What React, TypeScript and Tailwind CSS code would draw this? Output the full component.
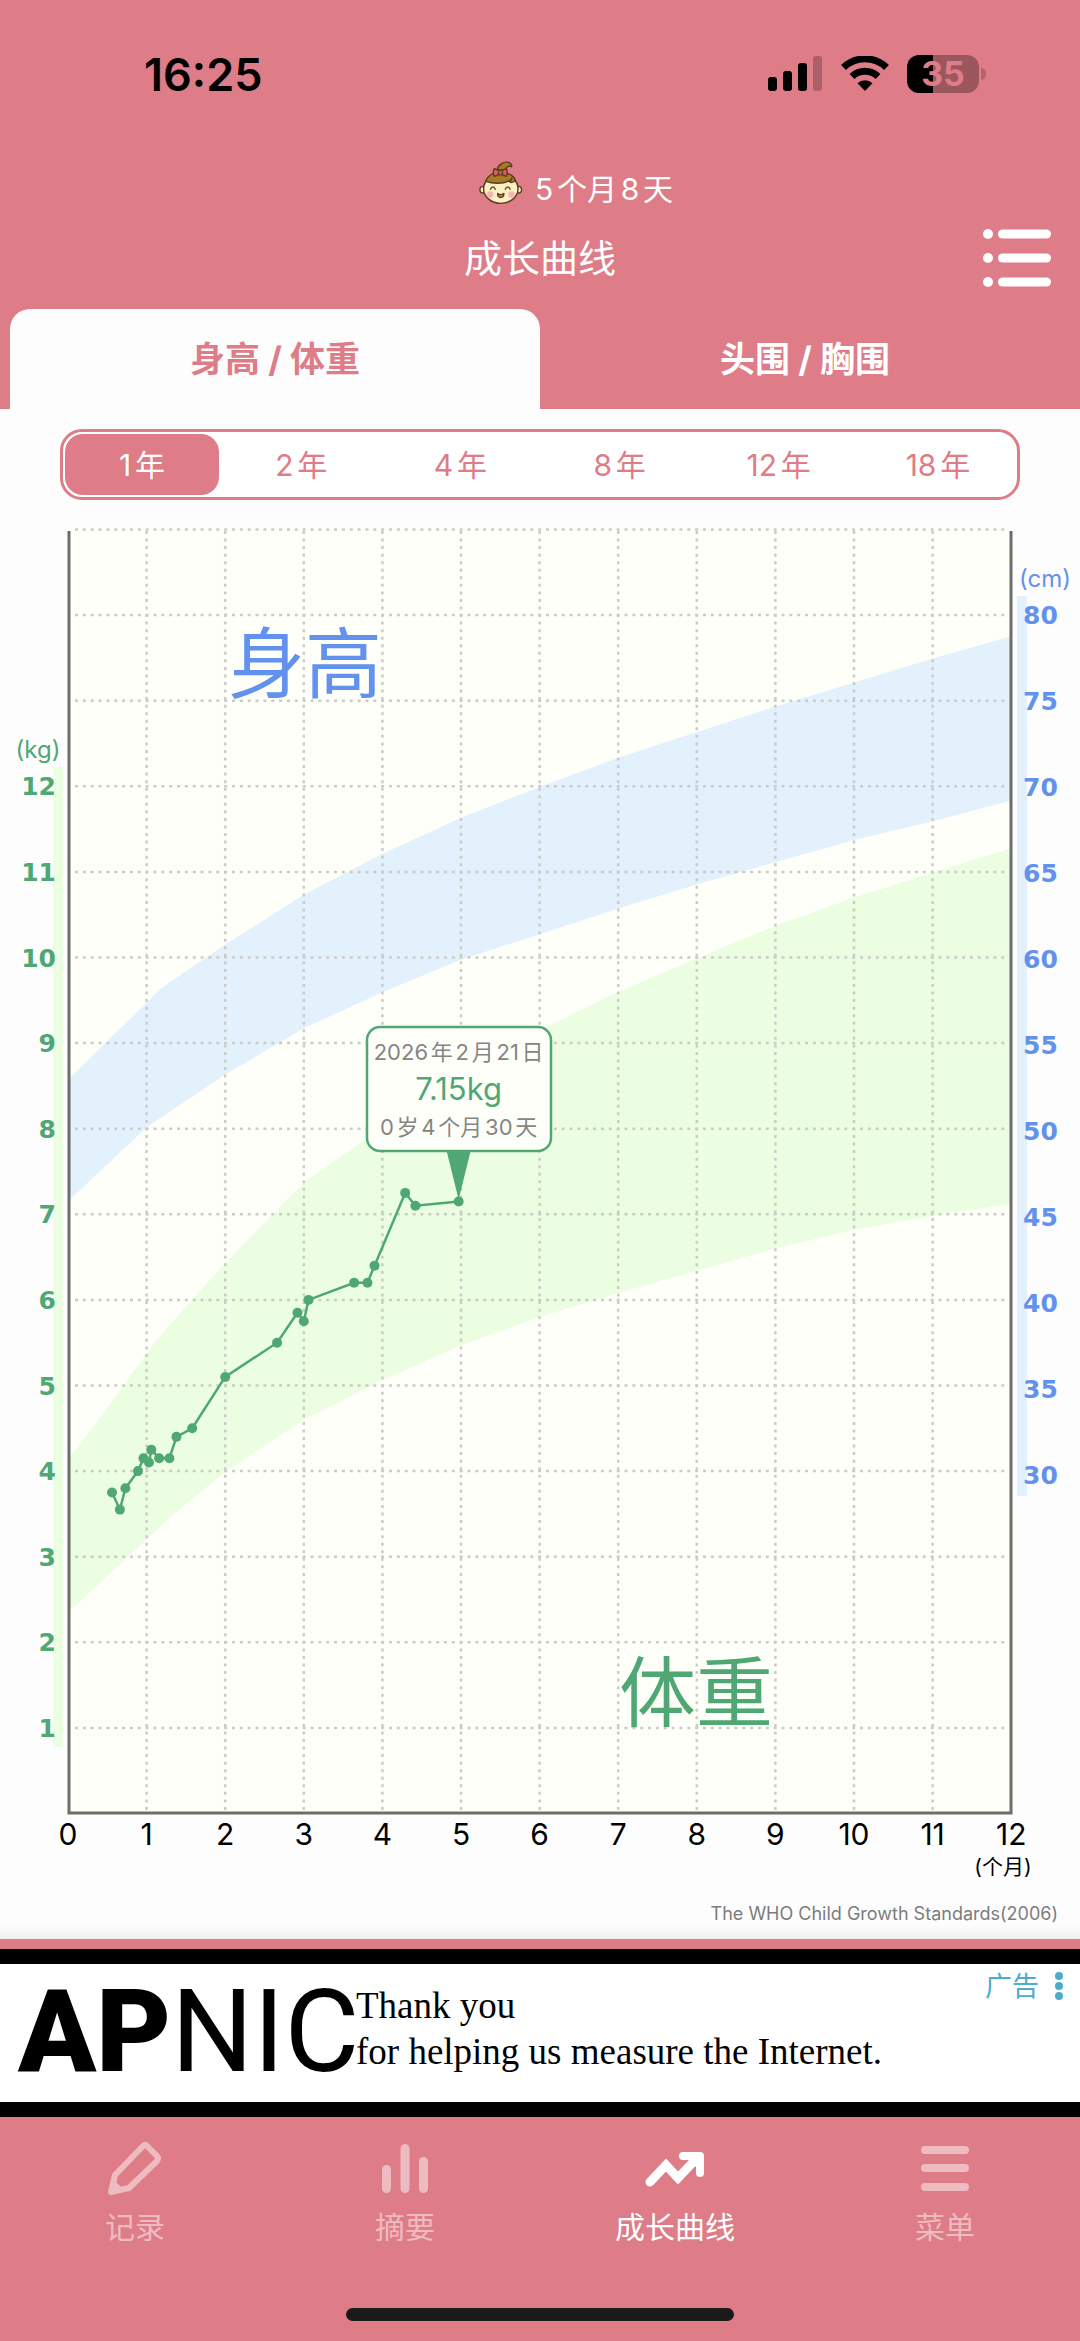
import { useState } from 'react';
import clsx from 'clsx';

type Point = [number, number];

// ---------------------------------------------------------------------------
// Data: WHO bands (month, value) and the recorded weights
// ---------------------------------------------------------------------------

const HEIGHT_UPPER: Point[] = [
  [0, 52.9], [1, 57.4], [1.17, 58.2], [2, 60.8], [3, 63.7], [4, 66.1], [5, 68.2],
  [6, 70], [7, 71.7], [8, 73.2], [9, 74.7], [10, 76.1], [11, 77.5], [12, 78.8],
];
const HEIGHT_LOWER: Point[] = [
  [0, 45.8], [1, 50.1], [1.25, 50.9], [2, 53.2], [3, 55.9], [4, 58], [5, 59.9],
  [6, 61.4], [7, 62.9], [8, 64.3], [9, 65.6], [10, 66.9], [11, 68], [12, 69.2],
];
const WEIGHT_UPPER: Point[] = [
  [0, 4.16], [0.1, 4.24], [1, 5.37], [1.17, 5.58], [2, 6.43], [3, 7.37], [4, 8.02], [5, 8.66],
  [6, 9.15], [7, 9.6], [8, 9.99], [9, 10.37], [10, 10.7], [11, 10.99], [12, 11.28],
];
const WEIGHT_LOWER: Point[] = [
  [0, 2.38], [0.1, 2.43], [1, 3.2], [1.3, 3.46], [2, 3.99], [3, 4.6], [4, 5.06], [5, 5.47],
  [6, 5.8], [7, 6.08], [8, 6.34], [9, 6.6], [10, 6.82], [11, 6.98], [12, 7.12],
];
const WEIGHTS: Point[] = [
  [0.56, 3.75], [0.66, 3.55], [0.73, 3.8], [0.89, 4], [0.96, 4.15], [1.03, 4.1], [1.06, 4.25],
  [1.16, 4.15], [1.29, 4.15], [1.38, 4.4], [1.58, 4.5], [2, 5.1], [2.66, 5.5], [2.92, 5.85],
  [3, 5.75], [3.06, 6], [3.64, 6.2], [3.81, 6.2], [3.9, 6.4], [4.29, 7.25], [4.42, 7.1], [4.97, 7.15],
];

const TABS = ['身高 / 体重', '头围 / 胸围'];
const RANGES = ['1年', '2年', '4年', '8年', '12年', '18年'];

// ---------------------------------------------------------------------------
// Chart
// ---------------------------------------------------------------------------

const LEFT = 68;
const RIGHT = 1011;
const TOP = 21;
const BOTTOM = 1303;
const ROW = 85.6;

const px = (month: number) => LEFT + month * 78.6;
const kgY = (kg: number) => 1303.5 - kg * ROW;
const cmY = (cm: number) => 105.7 + ((80 - cm) * ROW) / 5;

function band(upper: Point[], lower: Point[], y: (v: number) => number) {
  return [...upper, ...[...lower].reverse()].map(([m, v]) => `${px(m)},${y(v)}`).join(' ');
}

function GrowthChart() {
  const [lastMonth, lastKg] = WEIGHTS[WEIGHTS.length - 1];
  const tipX = px(lastMonth);
  const tipY = kgY(lastKg);
  return (
    <svg viewBox="0 0 1080 1380" className="mt-[10px] block w-full" role="img" aria-label="成长曲线">
      <rect x={LEFT} y={TOP} width={RIGHT - LEFT} height={BOTTOM - TOP} fill="#FFFFFA" />
      <polygon points={band(HEIGHT_UPPER, HEIGHT_LOWER, cmY)} fill="#E3F1FD" />
      <polygon points={band(WEIGHT_UPPER, WEIGHT_LOWER, kgY)} fill="#ECFEE1" />

      <g stroke="#CBCCC8" strokeWidth="2.5">
        {Array.from({ length: 15 }, (_, i) => (
          <line key={i} x1={LEFT + 7} x2={RIGHT - 3} y1={kgY(i + 1)} y2={kgY(i + 1)} strokeDasharray="3 4.85" />
        ))}
        {Array.from({ length: 11 }, (_, i) => (
          <line key={i} x1={px(i + 1)} x2={px(i + 1)} y1={TOP} y2={BOTTOM - 3} strokeDasharray="3 4.55" />
        ))}
      </g>
      <path d={`M69 ${TOP}V${BOTTOM}H${RIGHT}V${TOP}`} fill="none" stroke="#6C6E69" strokeWidth="3" />

      {/* weight axis */}
      <rect x="53" y="257" width="10" height="980" fill="#ECFEE1" />
      <g fill="#4FA873">
        <text x="38" y="248" textAnchor="middle" fontSize="24">(kg)</text>
        <g textAnchor="end" fontSize="25" fontWeight="700" className="font-['DejaVu_Sans',sans-serif]">
          {Array.from({ length: 12 }, (_, i) => (
            <text key={i} x="56" y={kgY(i + 1) + 9}>{i + 1}</text>
          ))}
        </g>
      </g>

      {/* height axis */}
      <rect x="1017" y="86" width="10" height="900" fill="#E3F1FD" />
      <g fill="#6291EE">
        <text x="1045" y="77" textAnchor="middle" fontSize="24">(cm)</text>
        <g fontSize="25" fontWeight="700" className="font-['DejaVu_Sans',sans-serif]">
          {Array.from({ length: 11 }, (_, i) => (
            <text key={i} x="1023" y={114 + i * 86}>{80 - i * 5}</text>
          ))}
        </g>
      </g>

      {/* month axis */}
      <g textAnchor="middle" fontSize="30">
        {Array.from({ length: 13 }, (_, i) => (
          <text key={i} x={px(i)} y="1335">{i}</text>
        ))}
      </g>
      <text x="1003" y="1364" textAnchor="middle" fontSize="21">(个月)</text>

      <text x="228" y="182" fontSize="77" fill="#6291EE">身高</text>
      <text x="619" y="1211" fontSize="77" fill="#4FA873">体重</text>

      <g fill="#4FA873">
        <polyline
          points={WEIGHTS.map(([m, kg]) => `${px(m)},${kgY(kg)}`).join(' ')}
          fill="none"
          stroke="#4FA873"
          strokeWidth="2.5"
        />
        {WEIGHTS.map(([m, kg]) => (
          <circle key={m} cx={px(m)} cy={kgY(kg)} r="5" />
        ))}
        <path d={`M${tipX - 12} 641H${tipX + 12}L${tipX} ${tipY - 2}Z`} />
      </g>
      <rect x="367" y="517" width="184" height="124" rx="13" fill="#FFFFFA" stroke="#4FA873" strokeWidth="2.5" />
      <g textAnchor="middle" fill="#858585">
        <text x={tipX} y="550" fontSize="22">2026年2月21日</text>
        <text x={tipX} y="590" fontSize="31" fill="#4FA873">7.15kg</text>
        <text x={tipX} y="625" fontSize="22">0岁4个月30天</text>
      </g>
    </svg>
  );
}

// ---------------------------------------------------------------------------
// Icons
// ---------------------------------------------------------------------------

function StatusIcons() {
  return (
    <div className="flex items-center gap-[18px]">
      <svg width="55" height="36" viewBox="0 0 55 36" aria-hidden="true">
        <rect x="0" y="21" width="9" height="14" rx="3" />
        <rect x="15" y="15" width="9" height="20" rx="3" />
        <rect x="30" y="7" width="9" height="28" rx="3" />
        <rect x="45" y="0" width="9" height="35" rx="3" opacity="0.22" />
      </svg>
      <svg width="48" height="36" viewBox="0 0 48 36" aria-hidden="true">
        <g fill="none" stroke="#000" strokeWidth="7">
          <path d="M2.5 11.5A31 31 0 0 1 45.5 11.5" />
          <path d="M11 20.5A19 19 0 0 1 37 20.5" />
        </g>
        <path d="M24 35L16.5 27.3A11 11 0 0 1 31.5 27.3Z" />
      </svg>
      <div className="flex items-center gap-[2px]">
        <div className="flex h-[38px] w-[72px] items-center justify-center rounded-[12px] bg-[linear-gradient(to_right,#000_26px,#9B565E_26px)] text-[34px] font-bold leading-none text-[#DE7C87]">
          35
        </div>
        <div className="h-3 w-[5px] rounded-r-full bg-[#B4646E]" />
      </div>
    </div>
  );
}

function BabyFace() {
  return (
    <svg width="44" height="44" viewBox="0 0 46 46" aria-hidden="true">
      <g stroke="#5A3D1C" strokeWidth="1.5" strokeLinejoin="round">
        <circle cx="4.5" cy="30" r="3.5" fill="#FBEFC4" />
        <circle cx="41" cy="30" r="3.5" fill="#FBEFC4" />
        <ellipse cx="22.8" cy="29" rx="18" ry="15.3" fill="#FBEFC4" />
        <path d="M7 21C10 14 17 11.5 24 12C31 12.5 36 15 38 20C36 23 33 23 31 21C25 24 14 24 7 21Z" fill="#A87A24" />
        <path d="M19 9C20 4 26 0 31 1.5C34 2.5 34.5 5 34 6C31 4 29 6 27 10Z" fill="#A87A24" />
        <path d="M31 21C33 20.5 34.5 19 34.5 17" fill="none" />
        <path d="M16 8L21 10V14L16 16C14.5 14 14.5 10 16 8Z" fill="#D95A66" />
        <path d="M28.5 8L23.5 10V14L28.5 16C30 14 30 10 28.5 8Z" fill="#D95A66" />
        <rect x="20.5" y="9.5" width="4" height="5" rx="1" fill="#D95A66" />
        <path d="M19.5 34C21.5 35.5 24 35.5 26 34C26 39.5 19.5 39.5 19.5 34Z" fill="#E58A7E" />
      </g>
      <circle cx="11.5" cy="35" r="3.5" fill="#F3B5B8" />
      <circle cx="34" cy="35" r="3.5" fill="#F3B5B8" />
      <g fill="none" stroke="#6B522C" strokeWidth="1.5" strokeLinecap="round">
        <path d="M12 29.5C13 26.5 16 26.5 17 29.5" />
        <path d="M27.5 29.5C28.5 26.5 31.5 26.5 32.5 29.5" />
      </g>
    </svg>
  );
}

function ListIcon() {
  return (
    <svg width="68" height="58" viewBox="0 0 68 58" fill="#fff" aria-hidden="true">
      {[5, 29, 53].map((y) => (
        <g key={y}>
          <circle cx="5" cy={y} r="5" />
          <rect x="15" y={y - 4.5} width="53" height="9" rx="4.5" />
        </g>
      ))}
    </svg>
  );
}

function PencilIcon() {
  return (
    <svg width="56" height="56" viewBox="0 0 56 56" fill="none" stroke="currentColor" strokeWidth="6" strokeLinejoin="round" aria-hidden="true">
      <path d="M4 51L8 34L36 5Q38 3 40 5L50 15Q52 17 50 20L22 47Z" />
      <path d="M3 52L6 40L17 49.5Z" fill="currentColor" strokeWidth="2" />
    </svg>
  );
}

function BarsIcon() {
  return (
    <svg width="56" height="56" viewBox="0 0 56 56" fill="currentColor" aria-hidden="true">
      <rect x="5" y="24" width="9" height="28" rx="4.5" />
      <rect x="23.5" y="3" width="9" height="49" rx="4.5" />
      <rect x="42" y="16" width="9" height="36" rx="4.5" />
    </svg>
  );
}

function TrendIcon() {
  return (
    <svg width="60" height="56" viewBox="0 0 60 56" fill="none" stroke="currentColor" strokeWidth="8" strokeLinecap="round" aria-hidden="true">
      <path d="M5 41L21 24L33 37L52 17" strokeWidth="9" />
      <path d="M38 15H55V32" strokeLinejoin="round" />
      <path d="M42 15H55V29Z" fill="currentColor" strokeWidth="2" />
    </svg>
  );
}

function MenuIcon() {
  return (
    <svg width="56" height="56" viewBox="0 0 56 56" fill="currentColor" aria-hidden="true">
      {[5, 23, 42].map((y) => (
        <rect key={y} x="4" y={y} width="48" height="8" rx="4" />
      ))}
    </svg>
  );
}

const NAV = [
  { label: '记录', Icon: PencilIcon },
  { label: '摘要', Icon: BarsIcon },
  { label: '成长曲线', Icon: TrendIcon, active: true },
  { label: '菜单', Icon: MenuIcon },
];

// ---------------------------------------------------------------------------
// Page sections
// ---------------------------------------------------------------------------

function Header() {
  return (
    <header className="text-white">
      <div className="flex h-[148px] items-center justify-between pl-36 pr-[94px] text-black">
        <span className="text-[45px] font-semibold leading-none">16:25</span>
        <StatusIcons />
      </div>
      <div className="flex h-[57px] items-end justify-center gap-3 pl-[72px]">
        <BabyFace />
        <span className="text-[30px] leading-[32px]">5个月8天</span>
      </div>
      <div className="grid h-[104px] grid-cols-[1fr_auto_1fr] items-center px-[29px] pt-[2px]">
        <h1 className="col-start-2 text-[38px] font-normal leading-none">成长曲线</h1>
        <button type="button" aria-label="列表" className="justify-self-end">
          <ListIcon />
        </button>
      </div>
    </header>
  );
}

function Tabs() {
  const [tab, setTab] = useState(0);
  return (
    <div role="tablist" className="grid h-[100px] grid-cols-2 px-[10px]">
      {TABS.map((label, i) => (
        <button
          key={label}
          type="button"
          role="tab"
          aria-selected={tab === i}
          onClick={() => setTab(i)}
          className={clsx(
            'rounded-t-[20px] text-[35px] font-bold leading-none',
            tab === i ? 'bg-[#FDFDFD] text-[#DE7C87]' : 'text-white',
          )}
        >
          {label}
        </button>
      ))}
    </div>
  );
}

function RangePicker() {
  const [range, setRange] = useState(RANGES[0]);
  return (
    <div className="mx-[60px] grid h-[71px] grid-cols-6 gap-[5px] rounded-[22px] border-[3px] border-[#DE7C87] bg-white p-[2px]">
      {RANGES.map((r) => (
        <button
          key={r}
          type="button"
          aria-pressed={range === r}
          onClick={() => setRange(r)}
          className={clsx(
            'rounded-[18px] text-[30px] leading-none',
            range === r ? 'bg-[#DE7C87] text-white' : 'text-[#DE7C87]',
          )}
        >
          {r}
        </button>
      ))}
    </div>
  );
}

function AdBanner() {
  return (
    <aside className="mt-[10px] flex h-[168px] border-y-[15px] border-black bg-white text-black">
      <svg width="356" height="138" viewBox="0 0 356 138" role="img" aria-label="APNIC" className="shrink-0 font-['Roboto',sans-serif]">
        <text x="18" y="107" fontSize="115">
          <tspan fontWeight="900">AP</tspan>
          NIC
        </text>
      </svg>
      <p className="grow pt-[19px] font-['Liberation_Serif',serif] text-[37px] leading-[46px]">
        Thank you
        <br />
        for helping us measure the Internet.
      </p>
      <button type="button" className="flex h-11 items-center gap-4 self-start pr-[17px] text-[27px] leading-none text-[#4CACCB]">
        广告
        <svg width="8" height="28" viewBox="0 0 8 28" fill="currentColor" aria-hidden="true">
          <circle cx="4" cy="4" r="4" />
          <circle cx="4" cy="14" r="4" />
          <circle cx="4" cy="24" r="4" />
        </svg>
      </button>
    </aside>
  );
}

function BottomNav() {
  return (
    <nav className="grid grid-cols-4 pt-6">
      {NAV.map(({ label, Icon, active }) => (
        <a
          key={label}
          href="#"
          aria-current={active ? 'page' : undefined}
          className={clsx('flex flex-col items-center gap-[15px]', active ? 'text-white' : 'text-[#EEBBC1]')}
        >
          <Icon />
          <span className="text-[30px] leading-[30px]">{label}</span>
        </a>
      ))}
    </nav>
  );
}

export default function App() {
  return (
    <div className="flex min-h-screen flex-col bg-[#DE7C87] font-['Inter','Noto_Sans_CJK_SC',sans-serif] [text-autospace:normal]">
      <Header />
      <Tabs />
      <main className="bg-[#FDFDFD] pt-5">
        <RangePicker />
        <GrowthChart />
        <p className="pr-[22px] pt-[13px] text-right text-[18px] leading-[22px] text-[#7C7C7C]">The WHO Child Growth Standards(2006)</p>
        <div className="h-[14px] bg-linear-to-b from-[#FDFDFD] to-[#F0F0F0]" />
      </main>
      <AdBanner />
      <BottomNav />
      <div className="mx-auto mb-5 mt-auto h-[13px] w-[36%] rounded-full bg-[#1A1A18]" />
    </div>
  );
}
